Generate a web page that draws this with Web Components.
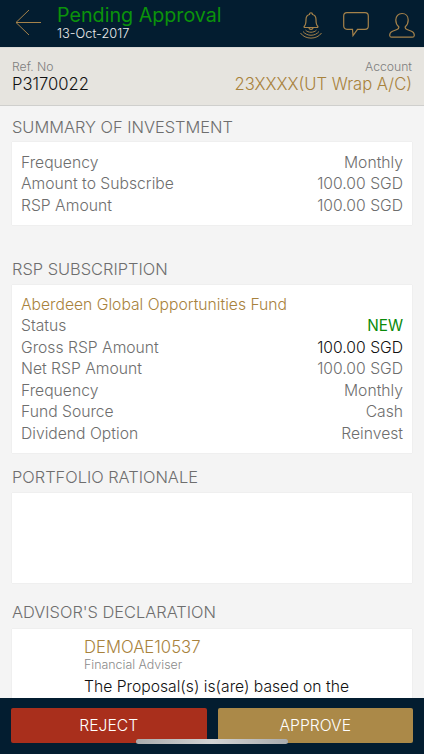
<!DOCTYPE html>
<html>
<head>
<meta charset="utf-8">
<title>Pending Approval</title>
<style>
html, body { margin: 0; padding: 0; height: 754px; overflow: hidden; }
body { font-family: Inter, "Liberation Sans", sans-serif; background: #f4f4f4; }
</style>
</head>
<body>
<approval-screen>
  <app-header slot="header" title="Pending Approval" date="13-Oct-2017"></app-header>
  <ref-band ref-no="P3170022" account="23XXXX(UT Wrap A/C)"></ref-band>

  <info-section heading="SUMMARY OF INVESTMENT" style="height:142px;--head:36px;--pad:9.5px">
    <info-row label="Frequency" value="Monthly"></info-row>
    <info-row label="Amount to Subscribe" value="100.00 SGD"></info-row>
    <info-row label="RSP Amount" value="100.00 SGD"></info-row>
  </info-section>

  <info-section heading="RSP SUBSCRIPTION" style="height:208px">
    <div style="color:#a8823c;font-size:15.7px;line-height:21.5px;font-weight:350">Aberdeen Global Opportunities Fund</div>
    <info-row label="Status" value="NEW" tone="green"></info-row>
    <info-row label="Gross RSP Amount" value="100.00 SGD" tone="black"></info-row>
    <info-row label="Net RSP Amount" value="100.00 SGD"></info-row>
    <info-row label="Frequency" value="Monthly"></info-row>
    <info-row label="Fund Source" value="Cash"></info-row>
    <info-row label="Dividend Option" value="Reinvest"></info-row>
  </info-section>

  <info-section heading="PORTFOLIO RATIONALE" style="height:135px" card-height="90"></info-section>

  <info-section heading="ADVISOR'S DECLARATION" indent="72" style="--head:38px;--pad:7.5px">
    <div style="color:#a8823c;font-size:16.7px;line-height:20px;font-weight:350">DEMOAE10537</div>
    <div style="color:#8a8a8a;font-size:12.4px;line-height:15px;font-weight:350">Financial Adviser</div>
    <div style="color:#111;font-size:15.7px;line-height:22px;margin-top:4px;font-weight:350">The Proposal(s) is(are) based on the information provided by the client.</div>
  </info-section>

  <action-bar slot="footer"></action-bar>
</approval-screen>

<script>
const screenTemplate = document.createElement('template');
screenTemplate.innerHTML = `
<style>
:host {
  display: flex;
  flex-direction: column;
  position: relative;
  width: 424px;
  height: 754px;
  overflow: hidden;
  background: #f4f4f4;
}
#scroll { flex: 1; min-height: 0; overflow: hidden; }
</style>
<slot name="header"></slot>
<div id="scroll"><slot></slot></div>
<slot name="footer"></slot>
`;
class ApprovalScreen extends HTMLElement {
  constructor() {
    super();
    this.attachShadow({ mode: 'open' }).appendChild(screenTemplate.content.cloneNode(true));
  }
}
customElements.define('approval-screen', ApprovalScreen);

const headerTemplate = document.createElement('template');
headerTemplate.innerHTML = `
<style>
:host {
  display: flex;
  align-items: flex-start;
  height: 47px;
  background: #031d30;
  border-bottom: 1px solid #d9d9d6;
  box-sizing: content-box;
}
#back { width: 57px; height: 47px; flex: none; }
#titles { flex: 1; min-width: 0; padding-top: 4px; }
#title { color: #0b930b; font-size: 19.7px; line-height: 22px; }
#date { color: #ececec; font-size: 12.8px; line-height: 14px; margin-top: 1px; font-weight: 350; }
#icons { display: flex; gap: 20px; flex: none; margin: 10px 9px 0 0; }
svg { display: block; fill: none; stroke: #a5824a; }
</style>
<svg id="back" viewBox="0 0 57 47" stroke-width="1">
  <path d="M29 10 L16 22.500 L29 35 M16 22.500 H41"/>
</svg>
<div id="titles"><div id="title"></div><div id="date"></div></div>
<div id="icons">
  <svg width="24" height="30" viewBox="0 0 24 30" stroke-width="1.2">
    <path d="M5.500 16 C7 14.500 7 12 7 9.500 C7 6.500 9 4.800 10.500 4.500 C10.500 3.300 11.200 2.800 12 2.800 C12.800 2.800 13.500 3.300 13.500 4.500 C15 4.800 17 6.500 17 9.500 C17 12 17 14.500 18.500 16 C19.300 16.800 19 17.500 18 17.500 H6 C5 17.500 4.700 16.800 5.500 16 Z"/>
    <path d="M10 17.500 C10 20 14 20 14 17.500"/>
    <path d="M6.500 20 C9 23 15 23 17.500 20 M4 21.500 C8 26.500 16 26.500 20 21.500 M1.500 23 C6 29.800 18 29.800 22.500 23" stroke-width="1"/>
  </svg>
  <svg width="26" height="30" viewBox="0 0 26 30" stroke-width="1.2">
    <path d="M4 2.600 H22 C24 2.600 25.300 3.900 25.300 5.900 V16 C25.300 18 24 19.300 22 19.300 H14.500 L10 25.500 L9.500 19.300 H4 C2 19.300 .7 18 .7 16 V5.900 C.7 3.900 2 2.600 4 2.600 Z"/>
  </svg>
  <svg width="26" height="30" viewBox="0 0 26 30" stroke-width="1.2">
    <path d="M13 3.500 C16.800 3.500 19.200 6.300 19.200 10 C19.200 13 18 15.300 16.300 16.700 C15.900 18 16.500 18.900 18 19.500 L22.500 21.300 C24.700 22.300 25.500 24 25.200 25.800 C25.100 26.700 24.400 27.200 23.500 27.200 H2.500 C1.600 27.200 .9 26.700 .8 25.800 C.5 24 1.300 22.300 3.500 21.300 L8 19.500 C9.500 18.900 10.100 18 9.700 16.700 C8 15.300 6.800 13 6.800 10 C6.800 6.300 9.200 3.500 13 3.500 Z"/>
  </svg>
</div>
`;
class AppHeader extends HTMLElement {
  constructor() {
    super();
    this.attachShadow({ mode: 'open' }).appendChild(headerTemplate.content.cloneNode(true));
  }
  connectedCallback() {
    this.shadowRoot.querySelector('#title').textContent = this.getAttribute('title');
    this.shadowRoot.querySelector('#date').textContent = this.getAttribute('date');
  }
}
customElements.define('app-header', AppHeader);

const bandTemplate = document.createElement('template');
bandTemplate.innerHTML = `
<style>
:host {
  display: flex;
  justify-content: space-between;
  height: 58px;
  padding: 11px 12px 0;
  box-sizing: border-box;
  background: #e6e4df;
  border-bottom: 1px solid #cfcfcd;
}
.label { color: #7d7d7d; font-size: 12.2px; line-height: 15px; font-weight: 350; }
.value { font-size: 16.6px; line-height: 21px; font-weight: 350; }
#ref { color: #111; }
#account { color: #a8823c; }
#right { text-align: right; }
</style>
<div><div class="label">Ref. No</div><div class="value" id="ref"></div></div>
<div id="right"><div class="label">Account</div><div class="value" id="account"></div></div>
`;
class RefBand extends HTMLElement {
  constructor() {
    super();
    this.attachShadow({ mode: 'open' }).appendChild(bandTemplate.content.cloneNode(true));
  }
  connectedCallback() {
    this.shadowRoot.querySelector('#ref').textContent = this.getAttribute('ref-no');
    this.shadowRoot.querySelector('#account').textContent = this.getAttribute('account');
  }
}
customElements.define('ref-band', RefBand);

const sectionTemplate = document.createElement('template');
sectionTemplate.innerHTML = `
<style>
:host { display: block; padding: 0 12px; box-sizing: border-box; }
#heading { color: #6e6e6e; font-size: 16.4px; line-height: 20px; padding-top: 11px; height: var(--head, 37px); box-sizing: border-box; font-weight: 350; }
#card {
  background: #fff;
  padding: var(--pad, 8.5px) 9px 9px;
  box-sizing: border-box;
  box-shadow: 0 0 1px rgba(0,0,0,.12);
}
</style>
<div id="heading"></div>
<div id="card"><slot></slot></div>
`;
class InfoSection extends HTMLElement {
  constructor() {
    super();
    this.attachShadow({ mode: 'open' }).appendChild(sectionTemplate.content.cloneNode(true));
  }
  connectedCallback() {
    this.shadowRoot.querySelector('#heading').textContent = this.getAttribute('heading');
    const card = this.shadowRoot.querySelector('#card');
    if (this.getAttribute('card-height')) card.style.height = this.getAttribute('card-height') + 'px';
    if (this.getAttribute('indent')) card.style.paddingLeft = this.getAttribute('indent') + 'px';
  }
}
customElements.define('info-section', InfoSection);

const rowTemplate = document.createElement('template');
rowTemplate.innerHTML = `
<style>
:host {
  display: flex;
  justify-content: space-between;
  color: #6e6e6e;
  font-size: 15.7px;
  line-height: 21.500px;
  font-weight: 350;
}
:host([tone="green"]) #value { color: #0a8a0a; font-size: 15.300px; font-weight: 400; }
:host([tone="black"]) #value { color: #111; }
</style>
<span id="label"></span><span id="value"></span>
`;
class InfoRow extends HTMLElement {
  constructor() {
    super();
    this.attachShadow({ mode: 'open' }).appendChild(rowTemplate.content.cloneNode(true));
  }
  connectedCallback() {
    this.shadowRoot.querySelector('#label').textContent = this.getAttribute('label');
    this.shadowRoot.querySelector('#value').textContent = this.getAttribute('value');
  }
}
customElements.define('info-row', InfoRow);

const barTemplate = document.createElement('template');
barTemplate.innerHTML = `
<style>
:host {
  display: flex;
  gap: 11px;
  flex: none;
  position: relative;
  height: 56px;
  padding: 10px 11px 0 11px;
  box-sizing: border-box;
  background: #031d30;
}
button {
  flex: 1;
  height: 35px;
  border: 0;
  border-radius: 2px;
  color: #fff;
  font: 350 15.7px Inter, "Liberation Sans", sans-serif;
  padding: 0;
}
#reject { background: #a92f1c; }
#approve { background: #ab8948; }
#home {
  position: absolute;
  left: 136px;
  top: 41px;
  width: 152px;
  height: 5px;
  border-radius: 3px;
  background: linear-gradient(90deg, #a9acae, #d2d3d3 50%, #a9acae);
}
</style>
<button id="reject">REJECT</button>
<button id="approve">APPROVE</button>
<div id="home"></div>
`;
class ActionBar extends HTMLElement {
  constructor() {
    super();
    this.attachShadow({ mode: 'open' }).appendChild(barTemplate.content.cloneNode(true));
  }
}
customElements.define('action-bar', ActionBar);
</script>
</body>
</html>
